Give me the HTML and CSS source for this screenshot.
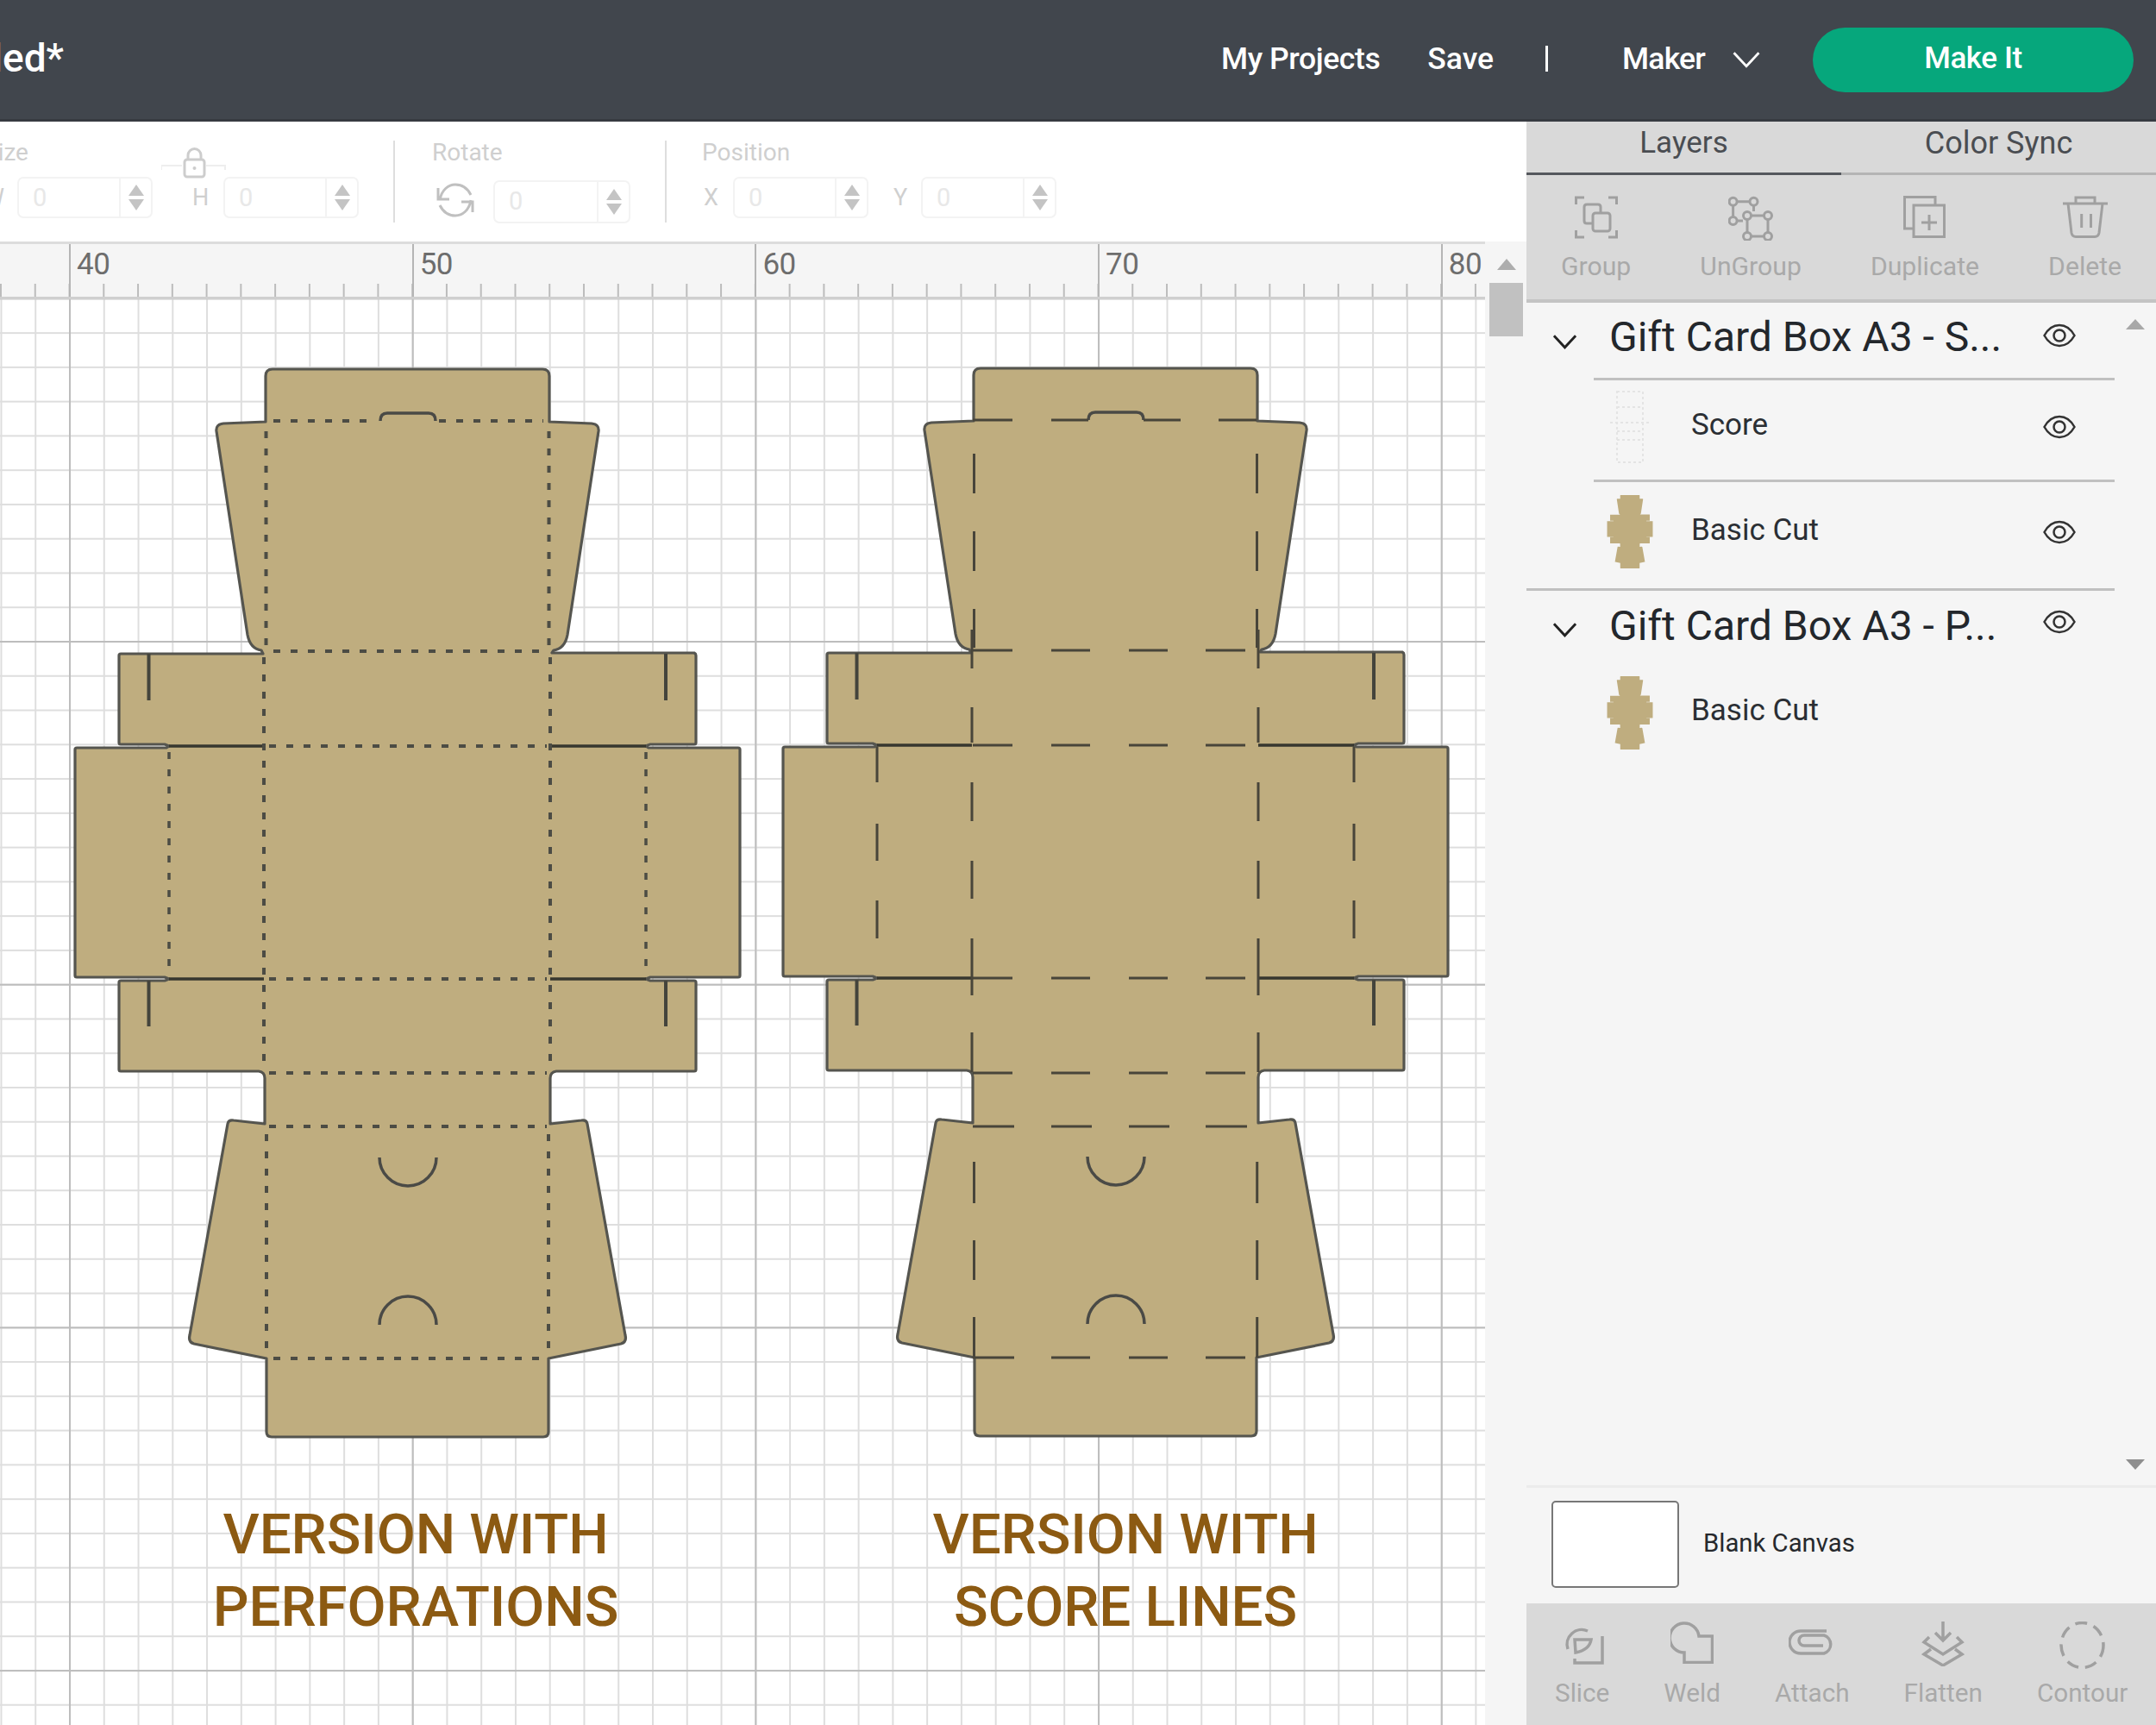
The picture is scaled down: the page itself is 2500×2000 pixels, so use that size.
FILE: index.html
```html
<!DOCTYPE html>
<html lang="en">
<head>
<meta charset="utf-8">
<title>Gift Card Box</title>
<link rel="stylesheet" href="styles.css">
</head>
<body>
<svg class="defs" width="0" height="0" aria-hidden="true">
  <defs>
    <path id="outline" d="M316 428H629Q637 428 637 436V489L686 491Q695 492 694 500L658 736Q655 752 642 754L640 757H805Q807 758 807 760V861Q807 863 805 863H754Q750 864 749 865L752 867H856Q858 867 858 869V1131Q858 1133 856 1133H754L749 1135L754 1137H805Q807 1137 807 1139V1240Q807 1242 805 1242H645Q638 1243 638 1250V1303L674 1299Q680 1298 681 1303L725 1548Q727 1556 720 1558L636 1575V1660Q636 1666 630 1666H315Q309 1666 309 1660V1575L225 1558Q218 1556 220 1548L264 1303Q265 1298 271 1299L307 1303V1250Q307 1243 300 1242H140Q138 1242 138 1240V1139Q138 1137 140 1137H191L196 1135L191 1133H89Q87 1133 87 1131V869Q87 867 89 867H193L196 865L191 863H140Q138 863 138 861V760Q138 758 140 758H305L303 754Q290 752 287 736L251 500Q250 492 259 491L308 489V436Q308 428 316 428Z"/>
    <g id="box-base">
      <use href="#outline" class="box-shape"/>
      <path class="slit" d="M172.500 758V812M772 758V812M172.500 1137V1190M772 1137V1190"/>
      <path class="seam" d="M196 865H306M638 865H749M196 1135H306M638 1135H749"/>
      <path class="cut" d="M441 488Q441 479 449 479H497Q505 479 505 488M440 1342A33 33 0 0 0 506 1342M440 1536A33 33 0 0 1 506 1536"/>
    </g>
    <symbol id="eye" viewBox="0 0 38 28">
      <path d="M1.500 14C6 6 12 2 19 2C26 2 32 6 36.500 14C32 22 26 26 19 26C12 26 6 22 1.500 14Z"/>
      <circle cx="19" cy="14" r="6.500"/>
    </symbol>
    <symbol id="chev" viewBox="0 0 30 18">
      <path d="M2 2L15 16L28 2"/>
    </symbol>
  </defs>
</svg>

<div class="page">
  <header class="topbar">
    <div class="title"><span>Untitled*</span></div>
    <nav class="topnav">
      <a class="nav-projects">My Projects</a>
      <a class="nav-save">Save</a>
      <span class="nav-sep"></span>
      <a class="nav-maker">Maker</a>
      <svg class="nav-chev"><use href="#chev"/></svg>
      <button class="make-it">Make It</button>
    </nav>
  </header>

  <div class="main">
    <div class="left">
      <div class="toolbar">
        <div class="tgroup size">
          <div class="tlabel">Size</div>
          <div class="trow">
            <span class="axis w">W</span>
            <div class="num"><span class="val">0</span><span class="spin"><i class="up"></i><i class="down"></i></span></div>
            <span class="axis h">H</span>
            <div class="num"><span class="val">0</span><span class="spin"><i class="up"></i><i class="down"></i></span></div>
          </div>
          <svg class="lock" viewBox="0 0 76 36">
            <path class="lock-link" d="M0 26V21H24M52 21H74V26"/>
            <rect class="lock-body" x="27" y="14" width="23" height="20" rx="3"/>
            <path class="lock-body" d="M31 14V9A7.500 7.500 0 0 1 46 9V14"/>
            <circle class="lock-dot" cx="38.500" cy="24" r="2"/>
          </svg>
        </div>
        <div class="tdiv"></div>
        <div class="tgroup rotate">
          <div class="tlabel">Rotate</div>
          <div class="trow">
            <svg class="rot-icon" viewBox="0 0 44 42">
              <path d="M4 21C6 9 14 3 22 3C30 3 36 7 40 15M2 7V20H15M40 21C38 33 30 39 22 39C14 39 8 35 4 27M42 35V23H29"/>
            </svg>
            <div class="num rot-num"><span class="val">0</span><span class="spin"><i class="up"></i><i class="down"></i></span></div>
          </div>
        </div>
        <div class="tdiv"></div>
        <div class="tgroup position">
          <div class="tlabel">Position</div>
          <div class="trow">
            <span class="axis x">X</span>
            <div class="num"><span class="val">0</span><span class="spin"><i class="up"></i><i class="down"></i></span></div>
            <span class="axis y">Y</span>
            <div class="num"><span class="val">0</span><span class="spin"><i class="up"></i><i class="down"></i></span></div>
          </div>
        </div>
      </div>

      <div class="workspace">
        <div class="stage">
          <div class="ruler">
            <div class="rcell first"></div>
            <div class="rcell">40</div>
            <div class="rcell">50</div>
            <div class="rcell">60</div>
            <div class="rcell">70</div>
            <div class="rcell">80</div>
          </div>
          <div class="canvas">
            <svg class="art" viewBox="0 347 1722 1653">
              <g>
                <use href="#box-base"/>
                <path class="perf" d="M317 488H436M509 488H630M317 755H630M312 865H634M312 1135H634M312 1244H634M312 1306H634M317 1575H630M308.500 500V750M636.500 500V750M306 762V1240M638 762V1240M309 1315V1570M636 1315V1570"/>
                <path class="perf thin" d="M196 872V1130M749 872V1130"/>
              </g>
              <g transform="translate(821 -1)">
                <use href="#box-base"/>
                <path class="score" d="M307 488H353M398 488H441M505 488H548M592 488H636M307 755H353M398 755H443M488 755H533M577 755H623M307 865H353M398 865H443M488 865H533M577 865H623M307 1135H353M398 1135H443M488 1135H533M577 1135H623M307 1245H353M398 1245H443M488 1245H533M577 1245H623M307 1307H355M398 1307H445M488 1307H535M577 1307H625M307 1575H355M398 1575H443M488 1575H533M577 1575H623"/>
                <path class="score" d="M308.500 527V573M308.500 617V663M308.500 707V752M636.500 527V573M636.500 617V663M636.500 707V752"/>
                <path class="score" d="M306 731V776M306 821V862M306 908V953M306 999V1043M306 1089V1155M306 1198V1244M638 731V776M638 821V862M638 908V953M638 999V1043M638 1089V1155M638 1198V1244"/>
                <path class="score" d="M308.500 1348V1396M308.500 1439V1485M308.500 1528V1575M636.700 1348V1396M636.700 1439V1485M636.700 1528V1575"/>
                <path class="score" d="M196 867V908M196 956V999M196 1045V1089M749 867V908M749 956V999M749 1045V1089"/>
              </g>
            </svg>
            <div class="cap cap-perf">VERSION WITH<br>PERFORATIONS</div>
            <div class="cap cap-score">VERSION WITH<br>SCORE LINES</div>
          </div>
        </div>
        <div class="vbar">
          <i class="arrow-up"></i>
          <div class="vthumb"></div>
        </div>
      </div>
    </div>

    <aside class="panel">
      <div class="tabs">
        <div class="tab active">Layers</div>
        <div class="tab sync">Color Sync</div>
      </div>
      <div class="actions">
        <div class="tool">
          <svg class="ico i-group" viewBox="0 0 50 50">
            <path d="M1.500 10V2H11M39 2H48.500V10M1.500 40V48H11M39 48H48.500V40"/>
            <path d="M21 32H14Q11 32 11 29V13Q11 10 14 10H27Q30 10 30 13V20"/>
            <rect x="21" y="20" width="20" height="21" rx="3"/>
          </svg>
          <span>Group</span>
        </div>
        <div class="tool">
          <svg class="ico i-ungroup" viewBox="0 0 52 52">
            <path d="M10 6.700H25M5.600 11V25M29.500 11V18M10 29H17M26.500 23H41.500M46 27.500V42.500M26.500 47H41.500M22 27.500V42.500"/>
            <circle cx="5.600" cy="6.700" r="4.500"/><circle cx="29.500" cy="6.700" r="4.500"/><circle cx="5.600" cy="29" r="4.500"/>
            <circle cx="22" cy="23" r="4.500"/><circle cx="46" cy="23" r="4.500"/><circle cx="22" cy="47" r="4.500"/><circle cx="46" cy="47" r="4.500"/>
          </svg>
          <span>UnGroup</span>
        </div>
        <div class="tool">
          <svg class="ico i-dup" viewBox="0 0 49 49">
            <path d="M37 11V1.500H1.500V38H12"/>
            <rect x="12" y="11" width="35.500" height="36.500"/>
            <path d="M30 22V40M21 31H39"/>
          </svg>
          <span>Duplicate</span>
        </div>
        <div class="tool">
          <svg class="ico i-del" viewBox="0 0 52 49">
            <path d="M0 9H52M15 9V2H37V9M6 9L10 43Q11 47.500 15 47.500H37Q41 47.500 42 43L46 9M21.700 21V37M32.500 21V37"/>
          </svg>
          <span>Delete</span>
        </div>
      </div>

      <div class="layers">
        <div class="lgroup first-group">
          <svg class="lchev"><use href="#chev"/></svg>
          <div class="ltitle">Gift Card Box A3 - S...</div>
          <svg class="eye"><use href="#eye"/></svg>
        </div>
        <div class="lrow score-row">
          <svg class="thumb score-thumb" viewBox="0 0 54 85">
            <path d="M12 2H42V84H12ZM12 20H42M12 48H42M12 58H42M4 38H50"/>
          </svg>
          <span class="lname">Score</span>
          <svg class="eye"><use href="#eye"/></svg>
        </div>
        <div class="lrow cut-row">
          <svg class="thumb" viewBox="87 428 771 1238"><use href="#outline" class="thumb-fill"/></svg>
          <span class="lname">Basic Cut</span>
          <svg class="eye"><use href="#eye"/></svg>
        </div>
        <div class="lgroup second-group">
          <svg class="lchev"><use href="#chev"/></svg>
          <div class="ltitle">Gift Card Box A3 - P...</div>
          <svg class="eye"><use href="#eye"/></svg>
        </div>
        <div class="lrow last-row">
          <svg class="thumb" viewBox="87 428 771 1238"><use href="#outline" class="thumb-fill"/></svg>
          <span class="lname">Basic Cut</span>
        </div>
        <i class="lscroll-up"></i>
        <i class="lscroll-down"></i>
      </div>

      <div class="blank">
        <div class="swatch"></div>
        <span class="blank-name">Blank Canvas</span>
      </div>

      <div class="bottom-tools">
        <div class="tool">
          <svg class="ico i-slice" viewBox="0 0 51 50">
            <path d="M9 32A17 17 0 0 1 32 11"/>
            <path d="M17 21H36Q34 33 18 36Z"/>
            <path d="M49 17V48H17V43"/>
          </svg>
          <span>Slice</span>
        </div>
        <div class="tool">
          <svg class="ico i-weld" viewBox="0 0 50 49">
            <path d="M16 36A17 17 0 1 1 33 17H48.500V47.500H16Z"/>
          </svg>
          <span>Weld</span>
        </div>
        <div class="tool">
          <svg class="ico i-attach" viewBox="0 0 54 30">
            <path d="M44 2H14A13 13 0 0 0 14 28H41A11 11 0 0 0 41 7H18A5.500 5.500 0 0 0 18 19H40"/>
          </svg>
          <span>Attach</span>
        </div>
        <div class="tool">
          <svg class="ico i-flat" viewBox="0 0 50 52">
            <path d="M25 0V21M16 13L25 22L34 13M9 18L3 24L25 38L47 24L41 18M11 32L3 38L25 51L47 38L39 32"/>
          </svg>
          <span>Flatten</span>
        </div>
        <div class="tool">
          <svg class="ico i-contour" viewBox="0 0 53 55">
            <ellipse cx="26.500" cy="27.500" rx="24.500" ry="26"/>
          </svg>
          <span>Contour</span>
        </div>
      </div>
    </aside>
  </div>
</div>
</body>
</html>
```

FILE: styles.css
```css
* { box-sizing: border-box; }
html, body { margin: 0; padding: 0; background: #fff; }
body { font-family: Roboto, "Liberation Sans", sans-serif; }
.defs { position: absolute; }
.page { width: 2500px; height: 2000px; display: flex; flex-direction: column; overflow: hidden; }

/* top bar */
.topbar { height: 141px; flex: none; background: #41464d; border-bottom: 3px solid #373b41; color: #fff; display: flex; align-items: center; justify-content: space-between; padding-right: 26px; }
.title { width: 74px; overflow: hidden; white-space: nowrap; display: flex; justify-content: flex-end; font-size: 46px; font-weight: 500; margin-bottom: 5px; }
.topnav { display: flex; align-items: center; font-size: 35.500px; font-weight: 500; letter-spacing: -0.4px; }
.topnav a { margin-bottom: 3px; }
.nav-save { margin-left: 55px; letter-spacing: 0; }
.nav-sep { width: 3px; height: 30px; background: #fff; margin: 0 0 3px 60px; }
.nav-maker { margin-left: 86px; letter-spacing: -0.8px; }
.nav-chev { width: 36px; height: 20px; margin-left: 30px; fill: none; stroke: #fff; stroke-width: 2.500px; }
.make-it { width: 372px; height: 75px; margin-left: 59px; border: 0; border-radius: 38px; padding: 0 0 3px; background: #06a77c; color: #fff; font: 500 35px Roboto, sans-serif; letter-spacing: -0.4px; }

.main { flex: 1; display: flex; min-height: 0; }
.left { width: 1770px; flex: none; display: flex; flex-direction: column; overflow: hidden; }

/* tool options */
.toolbar { height: 139px; flex: none; display: flex; background: #fff; padding-top: 22px; }
.tgroup { position: relative; display: flex; flex-direction: column; margin-top: -3px; }
.tlabel { font-size: 28px; line-height: 33px; color: #cfcfcf; }
.trow { display: flex; align-items: center; margin-top: 12px; }
.size { margin-left: -19px; width: 475px; }
.tdiv { width: 2px; height: 95px; background: #dedede; flex: none; }
.rotate { margin-left: 43px; width: 270px; }
.position { margin-left: 41px; }
.axis { font-size: 27px; color: #cfcfcf; flex: none; }
.axis.w { width: 39px; }
.axis.h { width: 36px; margin-left: 46px; text-align: left; }
.axis.x { width: 34px; margin-left: 2px; }
.axis.y { width: 32px; margin-left: 29px; }
.num { width: 157px; height: 48px; flex: none; display: flex; border: 2px solid #f3f3f3; border-radius: 7px; }
.val { flex: 1; padding-left: 16px; font-size: 29px; line-height: 44px; color: #e8e8e8; }
.spin { width: 37px; flex: none; border-left: 2px solid #f3f3f3; display: flex; flex-direction: column; align-items: center; justify-content: center; gap: 4px; }
.spin i { display: block; width: 0; height: 0; border-left: 9px solid transparent; border-right: 9px solid transparent; }
.spin .up { border-bottom: 13px solid #c4c4c4; }
.spin .down { border-top: 13px solid #c4c4c4; }
.lock { position: absolute; left: 206px; top: 11px; width: 76px; height: 36px; fill: none; }
.lock-link { stroke: #eee; stroke-width: 2px; }
.lock-body { stroke: #cdcdcd; stroke-width: 3px; fill: none; }
.lock-dot { fill: #cdcdcd; }
.rot-icon { width: 44px; height: 42px; margin-left: 5px; fill: none; stroke: #c0c0c0; stroke-width: 3px; flex: none; }
.rot-num { margin-left: 22px; margin-top: 4px; height: 50px; width: 159px; }

/* ruler + canvas */
.workspace { flex: 1; display: flex; min-height: 0; }
.stage { width: 1722px; flex: none; display: flex; flex-direction: column; overflow: hidden; }
.ruler { height: 67px; flex: none; display: flex; background-color: #f5f5f5; border-top: 3px solid #dcdcdc; border-bottom: 3px solid #cfcfcf; background-image: linear-gradient(to right, #bcbcbc 2px, transparent 2px); background-size: 39.770px 15px; background-position: 0 bottom; background-repeat: repeat-x; font-size: 35px; line-height: 48px; color: #6d6d6d; letter-spacing: -0.5px; }
.rcell { width: 397.700px; flex: none; border-left: 2px solid #b5b5b5; padding-left: 7px; }
.rcell.first { width: 80px; border-left: 0; }
.canvas { position: relative; flex: 1; min-height: 0; background-color: #fff;
  background-image:
    linear-gradient(to right, #bdbdbd 2px, transparent 2px),
    linear-gradient(to bottom, #bdbdbd 2px, transparent 2px),
    linear-gradient(to right, #dedede 2px, transparent 2px),
    linear-gradient(to bottom, #dedede 2px, transparent 2px);
  background-size: 397.700px 397.700px, 397.700px 397.700px, 39.770px 39.770px, 39.770px 39.770px;
  background-position: 80px 0, 0 396px, 80px 0, 0 396px;
}
.art { display: block; width: 1722px; height: 1653px; }
.box-shape { fill: #bfad7f; stroke: #55554f; stroke-width: 3.200px; stroke-linejoin: round; }
.slit { fill: none; stroke: #44443c; stroke-width: 4px; }
.seam { fill: none; stroke: #37372f; stroke-width: 3.500px; }
.cut { fill: none; stroke: #4a4a46; stroke-width: 3.500px; }
.perf { fill: none; stroke: #4c4c44; stroke-width: 4px; stroke-dasharray: 8 12; }
.perf.thin { stroke-width: 3.500px; }
.score { fill: none; stroke: #48453a; stroke-width: 3px; }
.cap { position: absolute; top: 1390px; width: 600px; text-align: center; font-size: 65.500px; line-height: 84px; font-weight: 500; color: #8c5a12; letter-spacing: -0.1px; }
.cap-perf { left: 182px; }
.cap-score { left: 1005px; }

.vbar { width: 48px; flex: none; background: #f5f5f5; padding: 20px 4px 0 5px; display: flex; flex-direction: column; align-items: center; }
.arrow-up { display: block; width: 0; height: 0; border-left: 11px solid transparent; border-right: 11px solid transparent; border-bottom: 13px solid #adadad; }
.vthumb { width: 39px; height: 62px; margin-top: 15px; background: #c1c1c1; }

/* right panel */
.panel { width: 730px; flex: none; display: flex; flex-direction: column; background: #f5f5f5; }
.tabs { height: 62px; flex: none; display: flex; background: #d9d9d9; }
.tab { width: 365px; text-align: center; font-size: 35px; line-height: 50px; color: #4a4d52; border-bottom: 3px solid #b4b4b4; }
.tab.active { border-bottom: 3px solid #55585d; }
.tab.sync { font-size: 36px; }
.actions { height: 148px; flex: none; background: #d9d9d9; border-bottom: 4px solid #c4c4c4; display: flex; gap: 80px; padding: 24px 0 0 40px; }
.tool { display: flex; flex-direction: column; align-items: center; font-size: 30.200px; color: #a9a9a9; line-height: 33px; }
.ico { fill: none; stroke: #a0a0a0; stroke-width: 3px; display: block; }
.i-group { width: 50px; height: 50px; margin-bottom: 15px; }
.i-ungroup { width: 52px; height: 52px; margin-bottom: 13px; }
.i-dup { width: 49px; height: 49px; margin-bottom: 16px; }
.i-del { width: 52px; height: 49px; margin-bottom: 16px; }

.layers { position: relative; flex: 1; min-height: 0; display: flex; flex-direction: column; }
.lgroup { display: flex; align-items: center; padding-left: 30px; margin-right: 48px; flex: none; }
.first-group { height: 87px; padding-bottom: 4px; }
.second-group { height: 80px; }
.lchev { width: 29px; height: 18px; fill: none; stroke: #222; stroke-width: 3px; margin-top: 6px; flex: none; }
.second-group .lchev { margin-top: 10px; }
.ltitle { margin-left: 37px; font-size: 48px; color: #23272c; white-space: nowrap; flex: 1; }
.first-group .ltitle { margin-bottom: 5px; }
.eye { width: 38px; height: 28px; flex: none; fill: none; stroke: #333; stroke-width: 2.500px; margin-right: 45px; }
.first-group .eye { margin-top: -8px; }
.second-group .eye { margin-top: -8px; }
.lrow { display: flex; align-items: center; margin: 0 48px 0 78px; padding: 0 0 8px 15px; flex: none; }
.score-row { height: 121px; border-top: 3px solid #c0c0c0; border-bottom: 3px solid #c0c0c0; }
.cut-row { height: 126px; margin-left: 0; padding-left: 93px; border-bottom: 3px solid #c0c0c0; }
.last-row { height: 122px; padding-bottom: 0; }
.last-row .lname { margin-bottom: 6px; }
.thumb { width: 54px; height: 85px; flex: none; }
.thumb-fill { fill: #bfad7f; stroke: none; }
.score-thumb { fill: none; stroke: #e4e4e4; stroke-width: 2px; stroke-dasharray: 3 3; }
.lname { margin: 0 0 4px 44px; font-size: 35px; color: #2b2f34; flex: 1; }
.lscroll-up, .lscroll-down { position: absolute; right: 13px; width: 0; height: 0; border-left: 11px solid transparent; border-right: 11px solid transparent; }
.lscroll-up { top: 19px; border-bottom: 12px solid #a8a8a8; }
.lscroll-down { bottom: 18px; border-top: 12px solid #8e8e8e; }

.blank { height: 137px; flex: none; display: flex; align-items: center; padding-left: 29px; gap: 28px; font-size: 29.300px; color: #26292d; border-top: 3px solid #ebebeb; }
.swatch { width: 148px; height: 101px; background: #fff; border: 2px solid #777; border-radius: 5px; margin-top: -4px; }
.blank-name { margin-bottom: 6px; }
.bottom-tools { height: 141px; flex: none; background: #d9d9d9; display: flex; gap: 63px; padding: 21px 0 0 33px; }
.bottom-tools .tool { line-height: 33px; font-size: 29.700px; }
.i-slice { width: 51px; height: 50px; margin-bottom: 16px; stroke-width: 3.500px; }
.i-weld { width: 50px; height: 49px; margin-bottom: 17px; stroke-width: 3.500px; }
.i-attach { width: 54px; height: 30px; margin: 9px 0 27px; stroke-width: 3.500px; }
.i-flat { width: 50px; height: 52px; margin-bottom: 14px; stroke-width: 3.500px; }
.i-contour { width: 53px; height: 55px; margin-bottom: 11px; stroke-width: 3.500px; stroke-dasharray: 14 8; }
```
